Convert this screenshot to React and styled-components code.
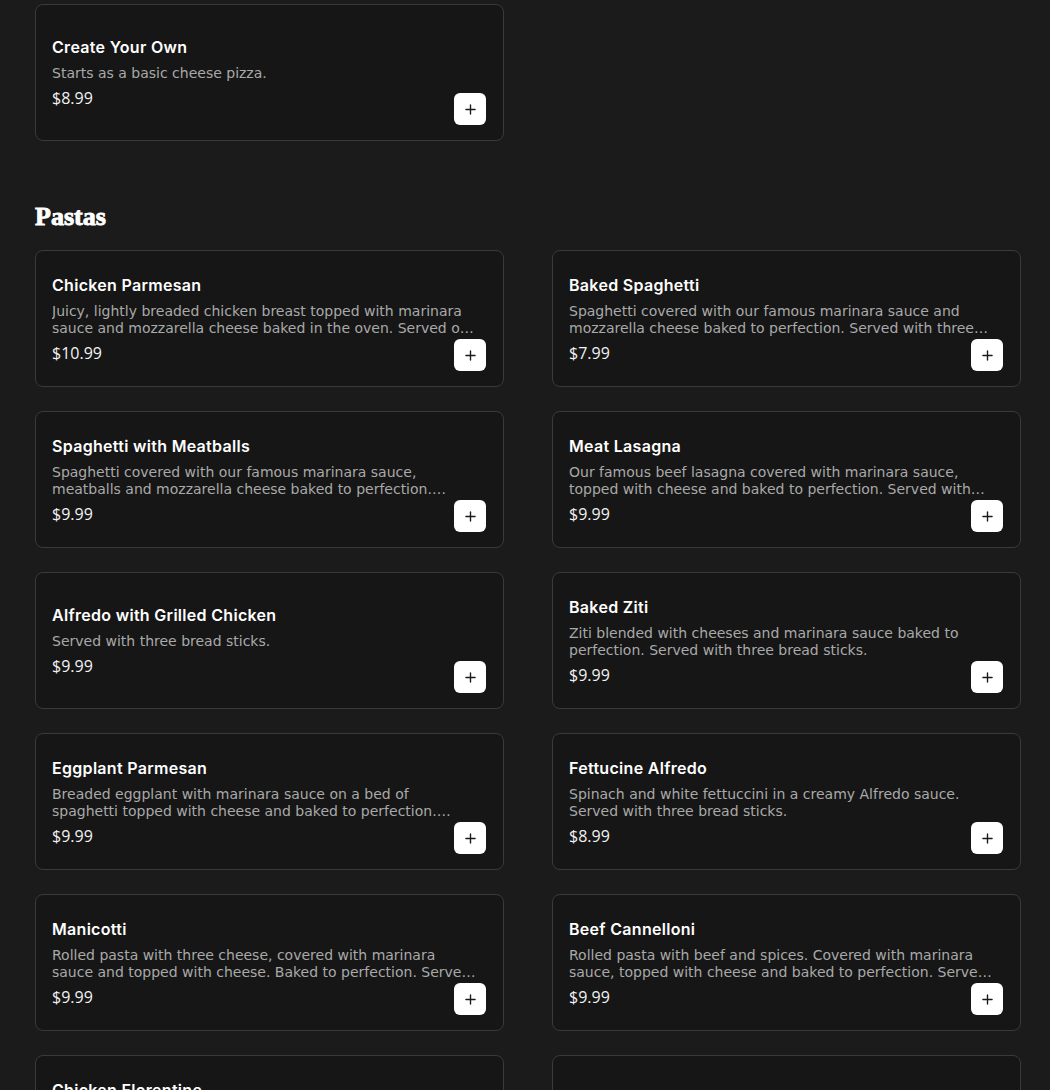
import React from 'react';
import styled, { createGlobalStyle } from 'styled-components';

const GlobalStyle = createGlobalStyle`
  html, body {
    margin: 0;
    padding: 0;
    background: #1b1b1b;
    font-family: "DejaVu Sans", "Noto Sans", sans-serif;
  }
  * { box-sizing: border-box; }
`;

const Page = styled.div`
  padding: 4px 30px 0 35px;
  height: 1090px;
  overflow: hidden;
`;

const Section = styled.section`
  margin-bottom: ${(p) => p.$gap || 0}px;
`;

const SectionTitle = styled.h2`
  margin: 0 0 18px;
  font-family: "Liberation Serif", "DejaVu Serif", serif;
  font-weight: 700;
  font-size: 26px;
  line-height: 30px;
  color: #ffffff;
  -webkit-text-stroke: 0.9px #ffffff;
`;

const Grid = styled.div`
  display: grid;
  grid-template-columns: 469px 469px;
  column-gap: 48px;
  row-gap: 24px;
`;

const Card = styled.div`
  position: relative;
  display: flex;
  flex-direction: column;
  justify-content: center;
  height: 137px;
  padding: 16px 26px 16px 16px;
  background: #161616;
  border: 1px solid #3a3a3a;
  border-radius: 8px;
`;

const Name = styled.div`
  font-family: Inter, "DejaVu Sans", sans-serif;
  font-size: 16px;
  font-weight: 600;
  letter-spacing: 0.3px;
  line-height: 24px;
  color: #ffffff;
  margin-bottom: 6px;
`;

const Desc = styled.div`
  font-size: 14px;
  line-height: 17px;
  color: #a9a9a9;
  display: -webkit-box;
  -webkit-line-clamp: 2;
  -webkit-box-orient: vertical;
  overflow: hidden;
  margin-bottom: 4px;
`;

const Price = styled.div`
  font-family: "Open Sans", "DejaVu Sans", sans-serif;
  font-size: 16px;
  line-height: 24px;
  color: #f2f2f2;
`;

const AddButton = styled.button`
  position: absolute;
  right: 17px;
  bottom: 15px;
  width: 32px;
  height: 32px;
  display: flex;
  align-items: center;
  justify-content: center;
  padding: 0;
  border: none;
  border-radius: 6px;
  background: #ffffff;
  color: #1a1a1a;
  cursor: pointer;
`;

const PlusIcon = () => (
  <svg width="11" height="11" viewBox="0 0 12 12" fill="none">
    <path d="M6 1v10M1 6h10" stroke="currentColor" strokeWidth="1.5" strokeLinecap="round" />
  </svg>
);

const pizzas = [
  { name: 'Create Your Own', desc: 'Starts as a basic cheese pizza.', price: '8.99' },
];

const pastas = [
  { name: 'Chicken Parmesan', desc: 'Juicy, lightly breaded chicken breast topped with marinara sauce and mozzarella cheese baked in the oven. Served on a bed of spaghetti with three bread sticks.', price: '10.99' },
  { name: 'Baked Spaghetti', desc: 'Spaghetti covered with our famous marinara sauce and mozzarella cheese baked to perfection. Served with three bread sticks.', price: '7.99' },
  { name: 'Spaghetti with Meatballs', desc: 'Spaghetti covered with our famous marinara sauce, meatballs and mozzarella cheese baked to perfection. Served with three bread sticks.', price: '9.99' },
  { name: 'Meat Lasagna', desc: 'Our famous beef lasagna covered with marinara sauce, topped with cheese and baked to perfection. Served with three bread sticks.', price: '9.99' },
  { name: 'Alfredo with Grilled Chicken', desc: 'Served with three bread sticks.', price: '9.99' },
  { name: 'Baked Ziti', desc: 'Ziti blended with cheeses and marinara sauce baked to perfection. Served with three bread sticks.', price: '9.99' },
  { name: 'Eggplant Parmesan', desc: 'Breaded eggplant with marinara sauce on a bed of spaghetti topped with cheese and baked to perfection. Served with three bread sticks.', price: '9.99' },
  { name: 'Fettucine Alfredo', desc: 'Spinach and white fettuccini in a creamy Alfredo sauce. Served with three bread sticks.', price: '8.99' },
  { name: 'Manicotti', desc: 'Rolled pasta with three cheese, covered with marinara sauce and topped with cheese. Baked to perfection. Served with three bread sticks.', price: '9.99' },
  { name: 'Beef Cannelloni', desc: 'Rolled pasta with beef and spices. Covered with marinara sauce, topped with cheese and baked to perfection. Served with three bread sticks.', price: '9.99' },
  { name: 'Chicken Florentine', desc: 'Grilled chicken with spinach in a creamy Alfredo sauce over fettuccini. Served with three bread sticks.', price: '10.99' },
  { name: 'Cheese Ravioli', desc: 'Served with three bread sticks.', price: '8.99' },
];

const MenuCard = ({ name, desc, price }) => (
  <Card>
    <Name>{name}</Name>
    <Desc>{desc}</Desc>
    <Price>${price}</Price>
    <AddButton aria-label={`Add ${name}`}>
      <PlusIcon />
    </AddButton>
  </Card>
);

export default function App() {
  return (
    <>
      <GlobalStyle />
      <Page>
        <Section $gap={61}>
          <Grid>
            {pizzas.map((item) => (
              <MenuCard key={item.name} {...item} />
            ))}
          </Grid>
        </Section>
        <Section>
          <SectionTitle>Pastas</SectionTitle>
          <Grid>
            {pastas.map((item) => (
              <MenuCard key={item.name} {...item} />
            ))}
          </Grid>
        </Section>
      </Page>
    </>
  );
}
